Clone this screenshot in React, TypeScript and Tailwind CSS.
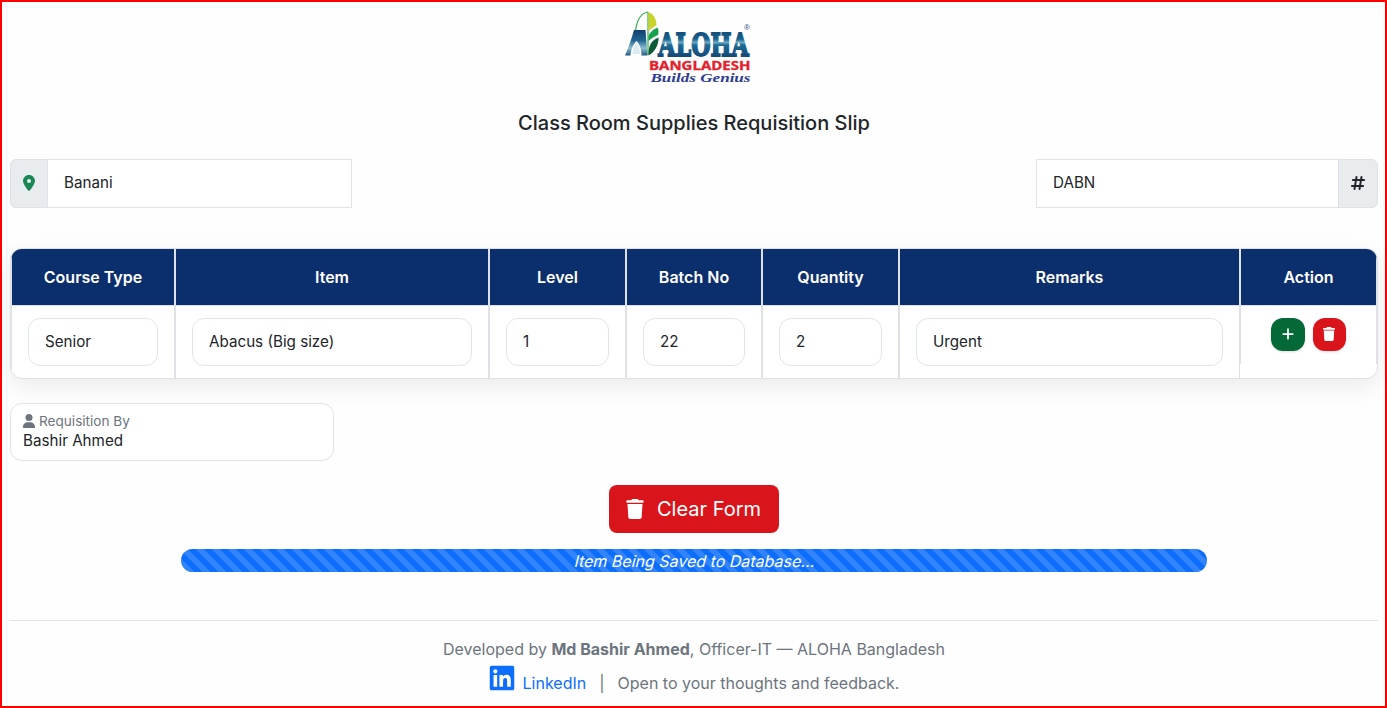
import type { ReactNode } from 'react';
import { FaHashtag, FaLinkedin, FaLocationDot, FaPlus, FaTrash, FaUser } from 'react-icons/fa6';

function Logo() {
  return (
    <svg width="130" height="80" viewBox="0 0 130 80" className="block overflow-visible" aria-label="ALOHA Bangladesh">
      <defs>
        <linearGradient id="steel" x1="0" y1="21" x2="0" y2="46" gradientUnits="userSpaceOnUse">
          <stop offset="0" stopColor="#154a78" />
          <stop offset="0.32" stopColor="#17628c" />
          <stop offset="0.46" stopColor="#6ba6c0" />
          <stop offset="0.56" stopColor="#1f6a94" />
          <stop offset="1" stopColor="#134a7a" />
        </linearGradient>
        <linearGradient id="hut" x1="0" y1="20" x2="0" y2="46" gradientUnits="userSpaceOnUse">
          <stop offset="0" stopColor="#123f6d" />
          <stop offset="0.4" stopColor="#1f6690" />
          <stop offset="0.7" stopColor="#8fbdd1" />
          <stop offset="1" stopColor="#1a527f" />
        </linearGradient>
      </defs>
      <path d="M10.500 21 C12 9 16.500 3 23 2 M23 2 V45" fill="none" stroke="#35b04a" strokeWidth="1.2" />
      <path d="M9 20 H20.500 L22.500 45.500 H16.500 C16.500 39 14.500 34 11.500 31 C8.500 34 6 39 5.500 45.500 H0 C3.500 38 6 30 9 20Z" fill="url(#hut)" />
      <path d="M11.500 33 C9 36 7.500 40 7.500 44 H15 C15 40 14 36 11.500 33Z" fill="#dcebf1" />
      <path d="M23.500 2 C28.500 4 31.500 9 31.500 15 C29 17 26 18.500 23.500 21Z" fill="#c8d42c" />
      <path d="M23.500 26 C25 22 29 19 32.500 17.500 C34 20 33.500 23.500 33 25 C29 26.500 26 28.500 23.500 31Z" fill="#16a14b" />
      <path d="M23.500 45.500 C23 37 26 30 33.500 27.500 C34 34 30 42 23.500 45.500Z" fill="#0c5a38" />
      <text x="33.300" y="45.500" fontFamily="DejaVu Serif, serif" fontWeight="700" fontSize="32.500" textLength="90.500" lengthAdjust="spacingAndGlyphs" fill="url(#steel)" stroke="url(#steel)" strokeWidth="1.800">ALOHA</text>
      <text x="119" y="19.500" fontFamily="Liberation Sans, sans-serif" fontSize="8" fill="#1d4f7c">®</text>
      <text x="24" y="59.500" fontFamily="Open Sans, sans-serif" fontWeight="700" fontSize="11.500" textLength="101.500" lengthAdjust="spacingAndGlyphs" fill="#e5202a" stroke="#e5202a" strokeWidth="0.3">BANGLADESH</text>
      <text x="25.500" y="71.500" fontFamily="Liberation Serif, serif" fontStyle="italic" fontWeight="700" fontSize="13" textLength="100" lengthAdjust="spacingAndGlyphs" fill="#2e3d94">Builds Genius</text>
    </svg>
  );
}

const columns = ['Course Type', 'Item', 'Level', 'Batch No', 'Quantity', 'Remarks', 'Action'];
const values = ['Senior', 'Abacus (Big size)', '1', '22', '2', 'Urgent'];
const grid = 'grid grid-cols-[164px_314px_137px_136px_137px_341px_136px]';

function Field({ children }: { children: ReactNode }) {
  return (
    <div className="flex h-12 items-center rounded-xl border border-[#dfe4ec] bg-white px-4 text-[15.2px] text-[#212529]">
      {children}
    </div>
  );
}

export default function App() {
  return (
    <main className="flex h-[708px] flex-col border-2 border-[#ff0000] bg-[#fefefe] pr-[7px] pl-2 font-['Inter',sans-serif] text-base text-[#212529]">
      <header className="flex flex-col items-center pt-2">
        <div className="pr-2">
          <Logo />
        </div>
        <h1 className="mt-[18px] text-[20px] leading-[30px] font-medium">Class Room Supplies Requisition Slip</h1>
      </header>

      <section className="mt-[21px] flex h-[49px] justify-between">
        <div className="flex w-[342px]">
          <div className="flex w-[38px] items-center justify-center rounded-l-md border border-[#dee2e6] bg-[#e9ecef] pb-0.5">
            <FaLocationDot className="size-4 text-[#198754]" />
          </div>
          <div className="-ml-px flex flex-1 items-center border border-[#dfe4ec] bg-white px-4 pb-px text-[15.2px]">Banani</div>
        </div>
        <div className="flex w-[342px]">
          <div className="-mr-px flex flex-1 items-center border border-[#dfe4ec] bg-white px-4 pb-px text-[15.2px]">DABN</div>
          <div className="flex w-10 items-center justify-center rounded-r-md border border-[#dee2e6] bg-[#e9ecef] pb-0.5">
            <FaHashtag className="size-4" />
          </div>
        </div>
      </section>

      <section className="mt-10 h-[131px] w-[1368px] overflow-hidden rounded-xl border border-[#dee2e6] bg-white shadow-[0_8px_24px_rgba(0,0,0,0.08)]">
        <div className={`${grid} h-14 border-l border-[#dee2e6] bg-[#0b2e6d]`}>
          {columns.map((name) => (
            <div key={name} className="flex items-center justify-center border-r-2 border-[#dee2e6] text-base font-semibold text-white last:border-r">
              {name}
            </div>
          ))}
        </div>
        <div className={`${grid} h-[73px] border-t border-l border-[#dee2e6]`}>
          {values.map((value, i) => (
            <div key={i} className="border-r-2 border-[#dee2e6] px-4 pt-3 nth-[6]:border-r-0 nth-[6]:pr-[18px]">
              <Field>{value}</Field>
            </div>
          ))}
          <div className="-ml-0.5 border-l border-[#dee2e6]">
            <div className="flex h-[58px] justify-center gap-2 border-x border-[#dee2e6] pt-3">
              <span className="flex h-[33px] w-[34px] items-center justify-center rounded-xl bg-[#046937] pb-0.5 text-white shadow-sm">
                <FaPlus className="size-3.5" />
              </span>
              <span className="flex size-[33px] items-center justify-center rounded-xl bg-[#d9151b] pr-px pb-0.5 text-white shadow-sm">
                <FaTrash className="size-3.5" />
              </span>
            </div>
          </div>
        </div>
      </section>

      <section className="mt-6 h-[58px] w-[324px] rounded-xl border border-[#dfe4ec] bg-white px-3 pt-[7px]">
        <div className="-ml-px flex h-5 items-center gap-[3px] text-[13.6px] text-[#6c757d]">
          <FaUser className="size-3.5" />
          Requisition By
        </div>
        <div className="text-[15.2px] leading-[19px]">Bashir Ahmed</div>
      </section>

      <section className="mt-6 flex flex-col items-center">
        <button className="flex h-12 w-[170px] items-center justify-center gap-3 rounded-lg bg-[#d9151b] pr-0.5 pb-px text-[20px] text-white">
          <FaTrash className="size-5" />
          Clear Form
        </button>
        <div className="mt-4 flex h-[23px] w-[1026px] items-center justify-center rounded-full bg-[#0d6efd] bg-[linear-gradient(45deg,rgba(255,255,255,0.15)_25%,transparent_25%,transparent_50%,rgba(255,255,255,0.15)_50%,rgba(255,255,255,0.15)_75%,transparent_75%,transparent)] bg-size-[16px_16px] bg-position-[-2px_0px] text-base text-white">
          <span className="-skew-x-[14deg] pt-px pl-[3px]">Item Being Saved to Database...</span>
        </div>
      </section>

      <footer className="mt-12 border-t border-[#dfe4ec] pt-4 text-center text-base text-[#6c757d]">
        <p className="h-6 leading-6">
          Developed by <strong className="font-bold">Md Bashir Ahmed</strong>, Officer-IT — ALOHA Bangladesh
        </p>
        <div className="mt-1 flex h-[34px] justify-center pr-px">
          <FaLinkedin className="-mt-px mr-px size-7 text-[#0d6efd]" />
          <a className="ml-1.5 pt-1.5 text-[#0d6efd]">LinkedIn</a>
          <span className="mx-[13px] pt-1.5">|</span>
          <span className="pt-1.5">Open to your thoughts and feedback.</span>
        </div>
      </footer>
    </main>
  );
}
